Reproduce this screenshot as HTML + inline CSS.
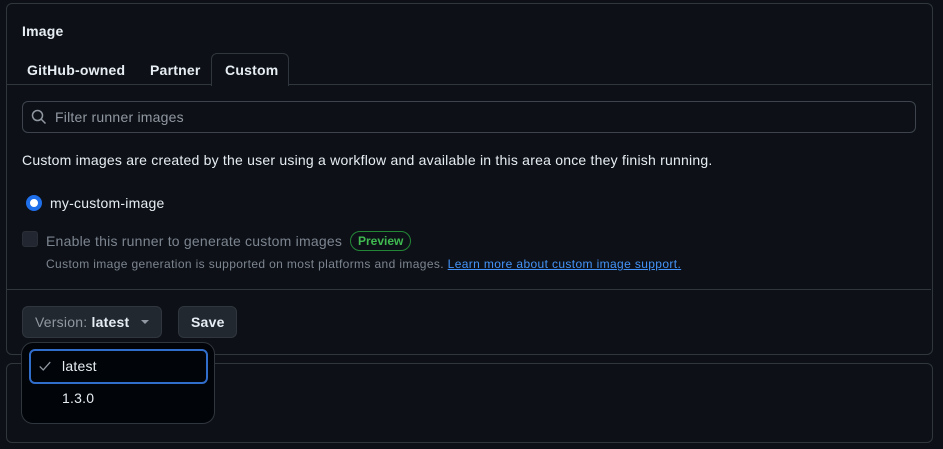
<!DOCTYPE html>
<html><head><style>
body{margin:0;width:943px;height:449px;background:#0d1117;font-family:"Liberation Sans",sans-serif;color:#e6edf3;position:relative;overflow:hidden;font-size:14px;letter-spacing:.22px}
.a{position:absolute}
</style></head><body>
<div class="a" style="left:6px;top:3px;width:925px;height:350px;border:1px solid #30363d;border-radius:6px"></div>
<div class="a" style="left:22px;top:23px;font-weight:bold;font-size:14px">Image</div>
<div class="a" style="left:27px;top:62px;font-weight:bold">GitHub-owned</div>
<div class="a" style="left:150px;top:62px;font-weight:bold">Partner</div>
<div class="a" style="left:211px;top:53px;width:76px;height:32px;border:1px solid #30363d;border-bottom:none;border-radius:6px 6px 0 0;background:#0d1117;z-index:2"></div>
<div class="a" style="left:225px;top:62px;font-weight:bold;z-index:3">Custom</div>
<div class="a" style="left:7px;top:84px;width:924px;height:1px;background:#30363d"></div>
<div class="a" style="left:22px;top:101px;width:892px;height:30px;border:1px solid #3d444d;border-radius:6px"></div>
<svg class="a" style="left:31px;top:109px" width="16" height="16" viewBox="0 0 16 16"><circle cx="6.5" cy="6.5" r="5" fill="none" stroke="#9198a1" stroke-width="1.5"/><path d="M10 10l4.5 4.5" stroke="#9198a1" stroke-width="1.5"/></svg>
<div class="a" style="left:55px;top:109px;color:#9198a1">Filter runner images</div>
<div class="a" style="left:22px;top:152px">Custom images are created by the user using a workflow and available in this area once they finish running.</div>
<div class="a" style="left:26px;top:195px;width:8px;height:8px;border:4px solid #1f6feb;border-radius:50%;background:#fff"></div>
<div class="a" style="left:50px;top:195px">my-custom-image</div>
<div class="a" style="left:22px;top:231px;width:14px;height:14px;border:1px solid #2a2f37;border-radius:3px;background:#212630"></div>
<div class="a" style="left:46px;top:233px;color:#7d8590">Enable this runner to generate custom images</div>
<div class="a" style="left:350px;top:231px;height:18px;padding:0 7px;border:1px solid #238636;border-radius:10px;color:#3fb950;font-size:12px;line-height:18px;font-weight:bold;letter-spacing:0">Preview</div>
<div class="a" style="left:46px;top:257px;color:#7d8590;font-size:12px;letter-spacing:.37px">Custom image generation is supported on most platforms and images. <span style="color:#4493f8;text-decoration:underline">Learn more about custom image support.</span></div>
<div class="a" style="left:7px;top:289px;width:924px;height:1px;background:#30363d"></div>
<div class="a" style="left:22px;top:306px;width:138px;height:30px;border:1px solid #30363d;border-radius:6px;background:#212830"></div>
<div class="a" style="left:35px;top:314px;color:#9198a1">Version: <b style="color:#e6edf3">latest</b></div>
<div class="a" style="left:141px;top:320px;width:0;height:0;border-left:4px solid transparent;border-right:4px solid transparent;border-top:4px solid #9198a1"></div>
<div class="a" style="left:178px;top:306px;width:57px;height:30px;border:1px solid #30363d;border-radius:6px;background:#212830"></div>
<div class="a" style="left:191px;top:314px;font-weight:bold">Save</div>
<div class="a" style="left:6px;top:363px;width:925px;height:78px;border:1px solid #30363d;border-radius:6px"></div>
<div class="a" style="left:21px;top:342px;width:192px;height:80px;border:1px solid #30363d;border-radius:12px;background:#010409"></div>
<div class="a" style="left:29px;top:349px;width:175px;height:31px;border:2px solid #316dca;border-radius:6px"></div>
<svg class="a" style="left:38px;top:359px" width="14" height="14" viewBox="0 0 16 16"><path d="M2 8.5l4 4 8-9" fill="none" stroke="#9198a1" stroke-width="1.5"/></svg>
<div class="a" style="left:62px;top:358px">latest</div>
<div class="a" style="left:62px;top:390px">1.3.0</div>
</body></html>
